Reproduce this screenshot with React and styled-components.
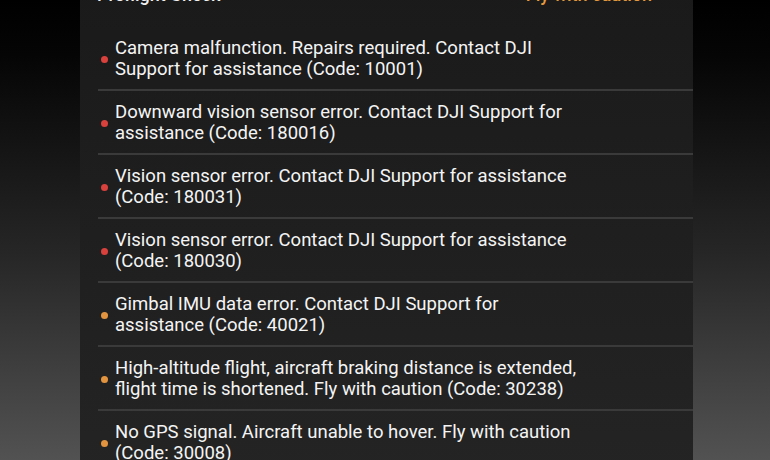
import React from 'react'
import styled, { createGlobalStyle } from 'styled-components'

const GlobalStyle = createGlobalStyle`
  html, body {
    margin: 0;
    padding: 0;
  }
  body {
    width: 770px;
    height: 460px;
    overflow: hidden;
    background: linear-gradient(180deg, #000 0%, #050505 12%, #262626 55%, #525252 100%);
    font-family: Roboto, "Liberation Sans", sans-serif;
  }
`

const items = [
  { level: 'error', text: 'Camera malfunction. Repairs required. Contact DJI Support for assistance (Code: 10001)' },
  { level: 'error', text: 'Downward vision sensor error. Contact DJI Support for assistance (Code: 180016)' },
  { level: 'error', text: 'Vision sensor error. Contact DJI Support for assistance (Code: 180031)' },
  { level: 'error', text: 'Vision sensor error. Contact DJI Support for assistance (Code: 180030)' },
  { level: 'warn', text: 'Gimbal IMU data error. Contact DJI Support for assistance (Code: 40021)' },
  { level: 'warn', text: 'High-altitude flight, aircraft braking distance is extended, flight time is shortened. Fly with caution (Code: 30238)' },
  { level: 'warn', text: 'No GPS signal. Aircraft unable to hover. Fly with caution (Code: 30008)' },
]

function App() {
  return (
    <>
      <GlobalStyle />
      <Panel>
        <Header>
          <Title>Preflight Check</Title>
          <Status>Fly with caution</Status>
        </Header>
        <List>
          {items.map((item, i) => (
            <Row key={i}>
              <Dot level={item.level} />
              <Message>{item.text}</Message>
            </Row>
          ))}
        </List>
      </Panel>
    </>
  )
}

export default App

const Panel = styled.div`
  width: 613px;
  height: 500px;
  margin: -16px 0 0 80px;
  padding-left: 18px;
  box-sizing: border-box;
  background: linear-gradient(180deg, #1a1a1a 0%, #1e1e1e 40%, #242424 100%);
`

const Header = styled.div`
  height: 43px;
  display: flex;
  justify-content: space-between;
  align-items: flex-start;
  padding-right: 41px;
  font-size: 18px;
  line-height: 22px;
  font-weight: 500;
`

const Title = styled.span`
  color: #f0f0f0;
  margin-left: -1px;
`

const Status = styled.span`
  color: #e59a3c;
`

const List = styled.div`
  display: flex;
  flex-direction: column;
`

const Row = styled.div`
  display: flex;
  align-items: center;
  padding: 11px 0 9px;
  border-bottom: 2px solid #3a3a3a;
`

const Dot = styled.span`
  flex: none;
  width: 7px;
  height: 7px;
  margin: 0 7px 0 3px;
  border-radius: 50%;
  background: ${p => (p.level === 'error' ? '#d9413d' : '#e3943f')};
`

const Message = styled.div`
  max-width: 470px;
  color: #f4f4f4;
  font-size: 18.5px;
  line-height: 21px;
`
